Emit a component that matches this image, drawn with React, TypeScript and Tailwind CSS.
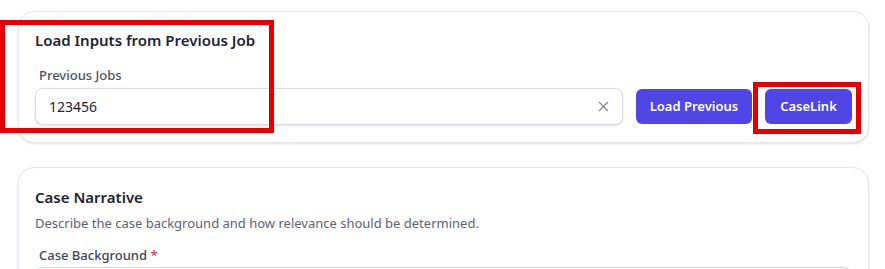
import { X } from "lucide-react";

const font = { fontFamily: '"Noto Sans", "Open Sans", sans-serif' };

const App = () => {
  return (
    <div className="relative w-[885px] h-[269px] overflow-hidden bg-white" style={font}>
      <div className="flex flex-col gap-6 pl-[18px] pr-[16px] pt-[11px]">
        {/* load previous job */}
        <div className="rounded-2xl border border-[#e5e8ee] bg-white px-4 pt-[16px] pb-[17px] shadow-sm">
          <h2 className="text-[15px] leading-6 font-semibold text-[#1e2433]">Load Inputs from Previous Job</h2>
          <label className="mt-[13px] block pl-1 text-[13px] leading-5 font-medium text-[#4a5263]">Previous Jobs</label>
          <div className="mt-[3px] flex items-center gap-[13px]">
            <div className="flex h-[37px] flex-1 items-center rounded-lg border border-[#d9dce3] bg-white pl-[13px] pr-[10px] shadow-sm">
              <span className="flex-1 text-[14px] text-[#1f2430]">123456</span>
              <X className="h-[17px] w-[17px] text-[#7a808c]" strokeWidth={1.5} />
            </div>
            <button className="h-[35px] w-[116px] rounded-md bg-[#4f46e5] text-[13px] font-semibold text-white">Load Previous</button>
            <button className="h-[35px] w-[87px] rounded-md bg-[#4f46e5] text-[13px] font-semibold text-white">CaseLink</button>
          </div>
        </div>

        {/* case narrative */}
        <div className="rounded-2xl border border-[#e5e8ee] bg-white px-4 pt-[17px] shadow-sm">
          <h2 className="text-[15px] leading-6 font-semibold text-[#1e2433]">Case Narrative</h2>
          <p className="mt-[4px] text-[13px] leading-5 text-[#5b6373]">Describe the case background and how relevance should be determined.</p>
          <label className="mt-[12px] block pl-1 text-[13px] leading-5 font-medium text-[#3d4454]">
            Case Background <span className="text-red-500">*</span>
          </label>
          <div className="mt-[2px] h-[40px] rounded-lg border border-[#cfd8e6]" />
        </div>
      </div>

      {/* highlight boxes */}
      <div className="absolute left-0 top-[20px] h-[113px] w-[274px] border-[5px] border-[#e30000]" />
      <div className="absolute left-[753px] top-[82px] h-[52px] w-[108px] border-[5px] border-[#e30000]" />
    </div>
  );
};

export default App;
